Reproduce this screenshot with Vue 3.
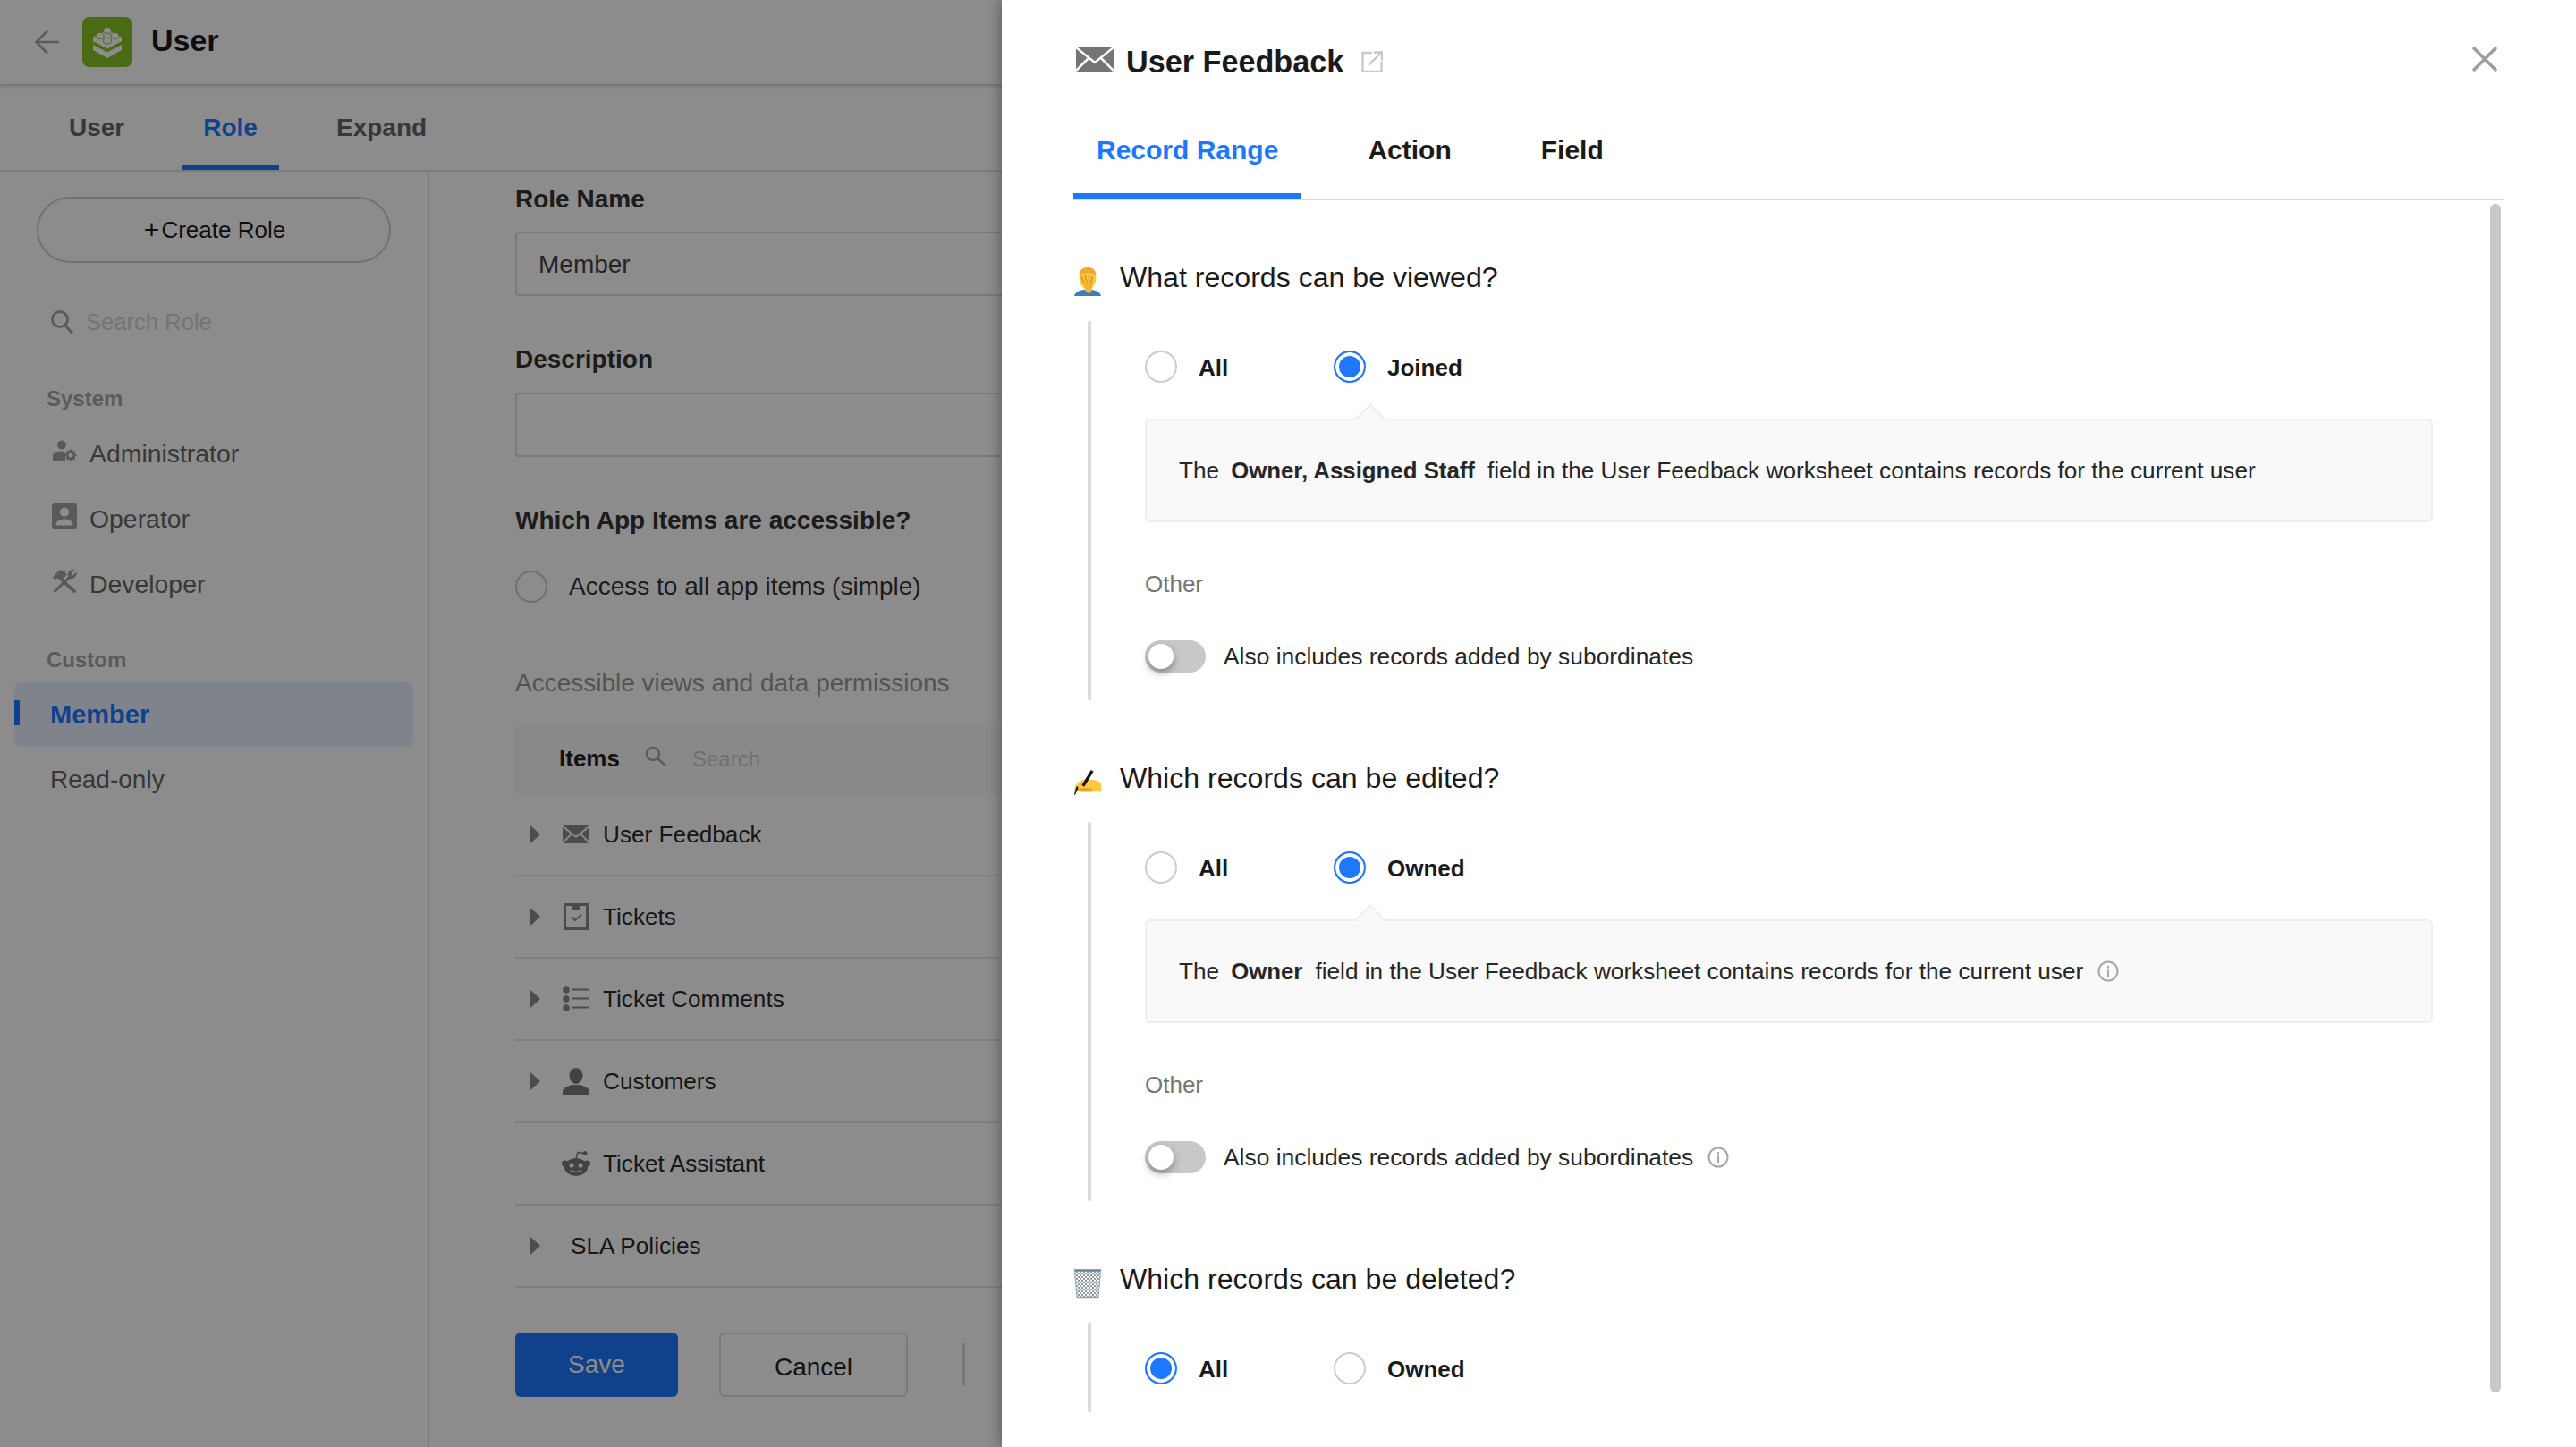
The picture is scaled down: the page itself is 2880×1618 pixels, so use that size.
<script setup>
const topTabs = ['User', 'Role', 'Expand']
const systemRoles = [
  { name: 'Administrator', icon: 'admin' },
  { name: 'Operator', icon: 'operator' },
  { name: 'Developer', icon: 'tools' }
]
const items = [
  { name: 'User Feedback', icon: 'mail', arrow: true },
  { name: 'Tickets', icon: 'ticket', arrow: true },
  { name: 'Ticket Comments', icon: 'list', arrow: true },
  { name: 'Customers', icon: 'person', arrow: true },
  { name: 'Ticket Assistant', icon: 'bot', arrow: false },
  { name: 'SLA Policies', icon: '', arrow: true }
]
const sections = [
  {
    title: 'What records can be viewed?',
    emoji: 'facepalm',
    options: [{ label: 'All', on: false }, { label: 'Joined', on: true }],
    field: 'Owner, Assigned Staff',
    info: false,
    toggleInfo: false
  },
  {
    title: 'Which records can be edited?',
    emoji: 'writing',
    options: [{ label: 'All', on: false }, { label: 'Owned', on: true }],
    field: 'Owner',
    info: true,
    toggleInfo: true
  },
  {
    title: 'Which records can be deleted?',
    emoji: 'trash',
    options: [{ label: 'All', on: true }, { label: 'Owned', on: false }],
    field: '',
    info: false,
    toggleInfo: false
  }
]
</script>

<template>
  <div class="page">
    <header class="app-head">
      <svg class="back" width="28" height="28" viewBox="0 0 28 28" fill="none" stroke="#a8a8a8" stroke-width="2.6">
        <path d="M1 14H27M14 1.500L1.500 14L14 26.500" />
      </svg>
      <span class="logo">
        <svg width="56" height="56" viewBox="0 0 56 56">
          <path d="M28 14L44 22.500V28L28 36.500L12 28V22.500Z" fill="#fff" />
          <path d="M12 31L28 39.500L44 31V37L28 46L12 37Z" fill="#fff" />
          <path d="M12 28L28 36.500L44 28" fill="none" stroke="#87c226" stroke-width="1.500" />
          <ellipse cx="28" cy="15" rx="4.500" ry="3.500" fill="#fff" stroke="#87c226" />
          <ellipse cx="19.500" cy="21" rx="4.500" ry="3.500" fill="#fff" stroke="#87c226" />
          <ellipse cx="36.500" cy="21" rx="4.500" ry="3.500" fill="#fff" stroke="#87c226" />
          <ellipse cx="28" cy="26.500" rx="4.500" ry="3.500" fill="#fff" stroke="#87c226" />
        </svg>
      </span>
      <span class="app-name">User</span>
    </header>

    <nav class="top-tabs">
      <span v-for="t in topTabs" :key="t" class="top-tab" :class="{ active: t === 'Role' }">{{ t }}</span>
    </nav>

    <div class="content">
      <aside class="sidebar">
        <div class="create-btn"><span class="plus">+</span>Create Role</div>
        <div class="side-search">
          <svg width="26" height="28" viewBox="0 0 26 28" fill="none" stroke="#a6a6a6" stroke-width="3">
            <circle cx="11" cy="11" r="8.500" />
            <path d="M17 18L25 27" />
          </svg>
          <span>Search Role</span>
        </div>
        <div class="side-label">System</div>
        <div v-for="r in systemRoles" :key="r.name" class="side-row">
          <svg v-if="r.icon === 'admin'" class="side-icon" width="28" height="24" viewBox="0 0 28 24" fill="#a3a3a3">
            <circle cx="11" cy="5.500" r="5" />
            <path d="M1 23V18C1 14 5 12.500 10 12.500C12 12.500 14 13 15 14V23Z" />
            <circle cx="21" cy="17" r="4" fill="none" stroke="#a3a3a3" stroke-width="3" />
            <path d="M21 10.500V13M21 21V23.500M14.500 17H17M25 17H27.500M16.500 12.500L18 14M24 20L25.500 21.500M16.500 21.500L18 20M24 14L25.500 12.500" stroke="#a3a3a3" stroke-width="2.200" />
          </svg>
          <svg v-else-if="r.icon === 'operator'" class="side-icon" width="28" height="28" viewBox="0 0 24 24">
            <path fill="#a3a3a3" d="M2.500 0H21.500A2.500 2.500 0 0 1 24 2.500V21.500A2.500 2.500 0 0 1 21.500 24H2.500A2.500 2.500 0 0 1 0 21.500V2.500A2.500 2.500 0 0 1 2.500 0ZM12 4A4.300 4.300 0 1 0 12 12.600A4.300 4.300 0 1 0 12 4ZM4 19.500V21H20V19.500C20 16.500 15 15 12 15C9 15 4 16.500 4 19.500Z" />
          </svg>
          <svg v-else class="side-icon" width="28" height="28" viewBox="0 0 28 28" fill="#a3a3a3">
            <path d="M1.500 25L19 8L21 10L3.500 27Z" />
            <path d="M9 13L11.500 10.500L27.500 25L25 27.500Z" />
            <path d="M1 9.500L8 1.500L16 2L14.500 4L17 6.500L10 13.500L7 10.500L3.500 12Z" />
            <path d="M18 9C16.500 4.500 20 0 25.500 1L21.500 5L23.500 7.500L27.500 3.500C28.500 8.500 24 12 20 11Z" />
          </svg>
          <span>{{ r.name }}</span>
        </div>
        <div class="side-label custom">Custom</div>
        <div class="side-row plain selected">Member</div>
        <div class="side-row plain">Read-only</div>
      </aside>

      <main class="main">
        <div class="field-title first">Role Name</div>
        <div class="text-input">Member</div>
        <div class="field-title">Description</div>
        <div class="text-input"></div>
        <div class="field-title">Which App Items are accessible?</div>
        <div class="simple-row">
          <span class="radio"></span>
          <span>Access to all app items (simple)</span>
        </div>
        <div class="muted-title">Accessible views and data permissions</div>
        <div class="items-head">
          <b>Items</b>
          <svg width="24" height="22" viewBox="0 0 24 22" fill="none" stroke="#a6a6a6" stroke-width="2.500">
            <circle cx="9" cy="8" r="7" />
            <path d="M14 13L23 21" />
          </svg>
          <span>Search</span>
        </div>
        <div v-for="it in items" :key="it.name" class="item-row" :class="{ bare: !it.icon }">
          <span class="arrow-slot"><i v-if="it.arrow" class="tri"></i></span>
          <span v-if="it.icon" class="item-icon">
            <svg v-if="it.icon === 'mail'" width="32" height="20" viewBox="0 0 42 28">
              <rect width="42" height="28" fill="#8a8a8a" />
              <path d="M0 1L21 18L42 1M0 27L15 12M42 27L27 12" fill="none" stroke="#fff" stroke-width="2.500" />
            </svg>
            <svg v-else-if="it.icon === 'ticket'" width="28" height="30" viewBox="0 0 28 30" fill="none" stroke="#8a8a8a">
              <rect x="1.500" y="1.500" width="25" height="27" stroke-width="3" />
              <path d="M10 2H18V7H10Z" fill="#8a8a8a" stroke="none" />
              <path d="M9 15L13 19L20 13" stroke-width="2" />
            </svg>
            <svg v-else-if="it.icon === 'list'" width="30" height="28" viewBox="0 0 30 28" fill="#8a8a8a">
              <circle cx="4" cy="4" r="3.800" />
              <circle cx="4" cy="14" r="3.800" />
              <circle cx="4" cy="24" r="3.800" />
              <path d="M11 2.500H30V4.500H11ZM11 12.500H30V14.500H11ZM11 22.500H30V24.500H11Z" />
            </svg>
            <svg v-else-if="it.icon === 'person'" width="30" height="30" viewBox="0 0 30 30" fill="#7a7a7a">
              <ellipse cx="15" cy="9" rx="7.500" ry="9" />
              <path d="M0 30V27C0 22 6 21 10 19H20C24 21 30 22 30 27V30Z" />
            </svg>
            <svg v-else width="32" height="28" viewBox="0 0 32 28" fill="#7a7a7a">
              <ellipse cx="16" cy="18" rx="13" ry="10" />
              <circle cx="3.500" cy="14" r="3.500" />
              <circle cx="28.500" cy="14" r="3.500" />
              <circle cx="26" cy="2.500" r="2.500" />
              <path d="M16 8L18 1.500L25 2.500" fill="none" stroke="#7a7a7a" stroke-width="1.500" />
              <circle cx="11" cy="16" r="2.500" fill="#fff" />
              <circle cx="21" cy="16" r="2.500" fill="#fff" />
              <path d="M10 21.500C13 24 19 24 22 21.500" fill="none" stroke="#fff" stroke-width="1.500" />
            </svg>
          </span>
          <span>{{ it.name }}</span>
        </div>
        <div class="actions">
          <span class="btn-save">Save</span>
          <span class="btn-cancel">Cancel</span>
          <span class="btn-sep"></span>
        </div>
      </main>
    </div>

    <div class="mask"></div>

    <section class="drawer">
      <div class="drawer-head">
        <svg width="42" height="28" viewBox="0 0 42 28">
          <rect width="42" height="28" fill="#757575" />
          <path d="M0 1L21 18L42 1M0 27L15 12M42 27L27 12" fill="none" stroke="#fff" stroke-width="2.500" />
        </svg>
        <span class="drawer-title">User Feedback</span>
        <svg class="open-link" width="24" height="24" viewBox="0 0 24 24" fill="none" stroke="#c8c8c8" stroke-width="2.400">
          <path d="M12 2H1.500V23H22.500V12" />
          <path d="M8 16L22 2M14 1.500H23V10.500" />
        </svg>
        <svg class="close" width="28" height="28" viewBox="0 0 28 28" stroke="#9e9e9e" stroke-width="3.500">
          <path d="M1 1L27 27M27 1L1 27" />
        </svg>
      </div>
      <div class="drawer-tabs">
        <span class="drawer-tab active">Record Range</span>
        <span class="drawer-tab">Action</span>
        <span class="drawer-tab">Field</span>
      </div>
      <div class="scrollbar"></div>

      <div class="drawer-body">
        <div v-for="s in sections" :key="s.title" class="perm">
          <div class="perm-title">
            <svg v-if="s.emoji === 'facepalm'" width="32" height="32" viewBox="0 0 32 32">
              <path d="M1 32C2 28 6 26 11 25H21C26 26 30 28 31 32Z" fill="#3f7cb8" />
              <ellipse cx="16" cy="12" rx="9.500" ry="12" fill="#fdc83e" />
              <path d="M6.500 9C7 2 11 0 16 0C21 0 25 2 25.500 9C22 5 10 5 6.500 9Z" fill="#f2a52f" />
              <path d="M9 10L12 18M13 8L15 17M17 8L18 17M21 10L20 18" stroke="#d98c1f" stroke-width="1.500" />
              <path d="M11 17H22L20 28C17 30 14 28 13 25Z" fill="#f5b335" />
            </svg>
            <svg v-else-if="s.emoji === 'writing'" width="34" height="32" viewBox="0 0 34 32">
              <path d="M7 15C12 12 17 11 20 13C25 12 30 14 33 17V27H14C9 27 4 27 1 24C2 21 4 17 7 15Z" fill="#fdc83e" />
              <path d="M5 24C10 22 15 22 22 23V27H8Z" fill="#e8a22b" />
              <path d="M21 1L10 19L13 21L24 3Z" fill="#141414" />
              <path d="M4 20L1 30L2 31L6 22Z" fill="#141414" />
            </svg>
            <svg v-else width="32" height="34" viewBox="0 0 32 34">
              <defs>
                <pattern id="mesh" width="4" height="4" patternUnits="userSpaceOnUse">
                  <rect width="4" height="4" fill="#f7f8f9" />
                  <path d="M0 0L4 4M4 0L0 4" stroke="#76848e" stroke-width=".8" />
                </pattern>
              </defs>
              <path d="M1 2H31L28 33H4Z" fill="url(#mesh)" />
              <path d="M1 2.500H31" stroke="#6f8494" stroke-width="2.500" />
              <path d="M1.500 3L4 33M30.500 3L28 33" stroke="#9aa8b2" stroke-width="1" />
              <path d="M4 32.500H28" stroke="#8fa3b2" stroke-width="1.500" />
            </svg>
            <span>{{ s.title }}</span>
          </div>
          <div class="perm-body">
            <div class="options">
              <label v-for="o in s.options" :key="o.label" class="option">
                <span class="radio" :class="{ on: o.on }"></span>
                <b>{{ o.label }}</b>
              </label>
            </div>
            <template v-if="s.field">
              <div class="note">
                <i class="caret"></i>
                <span>The</span><b>{{ s.field }}</b><span>field in the User Feedback worksheet contains records for the current user</span>
                <svg v-if="s.info" class="info" width="24" height="24" viewBox="0 0 24 24" fill="none" stroke="#a6a6a6" stroke-width="2">
                  <circle cx="12" cy="12" r="10.500" />
                  <path d="M12 10.500V18M12 6V8.500" />
                </svg>
              </div>
              <div class="other">Other</div>
              <div class="toggle-row">
                <span class="toggle"><i></i></span>
                <span>Also includes records added by subordinates</span>
                <svg v-if="s.toggleInfo" class="info" width="24" height="24" viewBox="0 0 24 24" fill="none" stroke="#a6a6a6" stroke-width="2">
                  <circle cx="12" cy="12" r="10.500" />
                  <path d="M12 10.500V18M12 6V8.500" />
                </svg>
              </div>
            </template>
          </div>
        </div>
      </div>
    </section>
  </div>
</template>

<style>
html,
body {
  margin: 0;
  background: #fff;
}
</style>

<style scoped>
.page {
  position: relative;
  width: 2880px;
  height: 1618px;
  overflow: hidden;
  background: #fff;
  color: #1a1a1a;
  font-family: "Liberation Sans", Arial, sans-serif;
  font-size: 28px;
  display: flex;
  flex-direction: column;
}

.app-head {
  height: 94px;
  flex: none;
  display: flex;
  align-items: center;
  padding-left: 39px;
  box-shadow: 0 2px 4px rgba(0, 0, 0, 0.2);
}

.back {
  margin-right: 25px;
}

.logo {
  width: 56px;
  height: 56px;
  border-radius: 8px;
  background: #87c226;
  margin-right: 21px;
}

.logo svg {
  display: block;
}

.app-name {
  font-size: 34px;
  line-height: 40px;
  margin-top: -4px;
  font-weight: 700;
}

.top-tabs {
  height: 98px;
  flex: none;
  box-sizing: border-box;
  border-bottom: 2px solid #e0e0e0;
  padding-left: 53px;
  display: flex;
  gap: 40px;
}

.top-tab {
  padding: 0 24px;
  height: 96px;
  box-sizing: border-box;
  line-height: 98px;
  font-weight: 700;
  color: #666;
  border-bottom: 6px solid transparent;
}

.top-tab.active {
  color: #1e77ff;
  border-bottom-color: #1e77ff;
}

.content {
  flex: 1;
  display: flex;
  min-height: 0;
}

.sidebar {
  width: 480px;
  flex: none;
  box-sizing: border-box;
  border-right: 2px solid #dcdcdc;
  padding: 28px 16px 0;
}

.create-btn {
  margin: 0 25px;
  height: 74px;
  width: 396px;
  box-sizing: border-box;
  border: 2px solid #cfcfcf;
  border-radius: 37px;
  display: flex;
  align-items: center;
  justify-content: center;
  padding-left: 2px;
  font-size: 26px;
}

.plus {
  font-size: 30px;
  margin-right: 2px;
}

.side-search {
  margin-top: 46px;
  height: 40px;
  padding-left: 40px;
  display: flex;
  align-items: center;
  gap: 14px;
  font-size: 25.6px;
  color: #d4d4d4;
}

.side-label {
  margin-top: 50px;
  padding-left: 36px;
  height: 32px;
  line-height: 32px;
  margin-bottom: 9px;
  font-size: 24px;
  font-weight: 700;
  color: #a6a6a6;
}

.side-label.custom {
  margin-top: 33px;
}

.side-row {
  height: 72px;
  margin-bottom: 1px;
  padding-left: 42px;
  display: flex;
  align-items: center;
  font-size: 28.4px;
  color: #666;
  border-radius: 8px;
}

.side-icon {
  width: 28px;
  margin-right: 14px;
  position: relative;
  top: -3px;
}

.side-row.plain {
  padding-left: 40px;
  font-size: 28px;
}

.side-row.selected {
  position: relative;
  font-size: 29px;
  font-weight: 700;
  color: #1e77ff;
  background: #e8f1ff;
}

.selected::before {
  content: "";
  position: absolute;
  left: 0;
  top: 20px;
  width: 6px;
  height: 28px;
  background: #1e77ff;
}

.main {
  flex: 1;
  min-width: 0;
  padding-left: 96px;
}

.field-title {
  height: 36px;
  line-height: 36px;
  margin-top: 53px;
  margin-bottom: 19px;
  font-weight: 700;
  color: #333;
}

.field-title.first {
  margin-top: 13px;
  margin-bottom: 18px;
}

.text-input {
  height: 72px;
  line-height: 70px;
  box-sizing: border-box;
  border: 2px solid #dedede;
  border-radius: 4px;
  padding-left: 24px;
  color: #444;
}

.simple-row {
  height: 40px;
  margin-top: 36px;
  display: flex;
  align-items: center;
  gap: 24px;
  color: #333;
}

.muted-title {
  height: 36px;
  line-height: 36px;
  margin-top: 70px;
  color: #999;
}

.items-head {
  margin-top: 27px;
  height: 79px;
  background: #fafafa;
  padding-left: 49px;
  display: flex;
  align-items: center;
  font-size: 26px;
}

.items-head b {
  color: #222;
  width: 96px;
}

.items-head svg {
  position: relative;
  top: -3px;
}

.items-head span {
  margin-left: 29px;
  font-size: 24px;
  color: #ccc;
}

.item-row {
  height: 92px;
  box-sizing: border-box;
  border-bottom: 2px solid #e8e8e8;
  display: flex;
  align-items: center;
  padding-left: 17px;
  font-size: 26.2px;
  color: #2a2a2a;
}

.arrow-slot {
  width: 35px;
  flex: none;
}

.bare .arrow-slot {
  width: 45px;
}

.tri {
  display: block;
  width: 0;
  height: 0;
  border-left: 11px solid #8a8a8a;
  border-top: 10px solid transparent;
  border-bottom: 10px solid transparent;
}

.item-icon {
  width: 32px;
  margin-right: 14px;
  display: flex;
  justify-content: center;
}

.actions {
  margin-top: 50px;
  display: flex;
  align-items: center;
  gap: 46px;
}

.btn-save,
.btn-cancel {
  height: 72px;
  box-sizing: border-box;
  border-radius: 6px;
  display: flex;
  align-items: center;
  justify-content: center;
}

.btn-save {
  width: 182px;
  background: #1e77ff;
  color: #fff;
}

.btn-cancel {
  width: 211px;
  border: 2px solid #dcdcdc;
  padding-top: 6px;
  color: #222;
}

.btn-sep {
  width: 4px;
  height: 48px;
  margin-left: 14px;
  background: #dcdcdc;
}

.mask {
  position: absolute;
  inset: 0;
  background: rgba(0, 0, 0, 0.45);
}

.drawer {
  position: absolute;
  top: 0;
  right: 0;
  bottom: 0;
  width: 1760px;
  background: #fff;
  box-shadow: 0 0 16px rgba(0, 0, 0, 0.4);
  padding: 0 80px;
  box-sizing: border-box;
}

.drawer-head {
  height: 140px;
  box-sizing: border-box;
  padding-top: 49px;
  display: flex;
  align-items: flex-start;
  position: relative;
}

.drawer-head > svg:first-child {
  margin-left: 3px;
  margin-top: 3px;
}

.drawer-title {
  margin-left: 14px;
  font-size: 34.2px;
  line-height: 40px;
  font-weight: 700;
}

.open-link {
  margin-left: 20px;
  margin-top: 8px;
}

.close {
  position: absolute;
  top: 52px;
  right: 8px;
}

.drawer-tabs {
  height: 84px;
  box-sizing: border-box;
  border-bottom: 2px solid #dcdcdc;
  display: flex;
  gap: 48px;
}

.drawer-tab {
  height: 82px;
  box-sizing: border-box;
  padding: 0 26px;
  font-size: 30px;
  line-height: 56px;
  font-weight: 700;
  border-bottom: 6px solid transparent;
}

.drawer-tab.active {
  color: #1e77ff;
  border-bottom-color: #1e77ff;
}

.scrollbar {
  position: absolute;
  left: 1664px;
  top: 228px;
  width: 12px;
  height: 1329px;
  border-radius: 6px;
  background: #c8c8c8;
}

.drawer-body {
  padding-top: 66px;
}

.perm {
  margin-bottom: 67px;
}

.perm-title {
  height: 40px;
  display: flex;
  align-items: center;
  font-size: 32.1px;
  line-height: 40px;
  color: #1a1a1a;
}

.perm-title svg {
  width: 32px;
  margin-right: 20px;
  position: relative;
  top: 5px;
}

.perm-body {
  margin-top: 29px;
  margin-left: 16px;
  border-left: 4px solid #dcdcdc;
  border-radius: 2px;
  padding: 33px 0 31px 60px;
}

.options {
  display: flex;
  height: 36px;
  font-size: 26px;
}

.option {
  width: 211px;
  display: flex;
  align-items: center;
  gap: 24px;
}

.option b {
  padding-top: 2px;
}

.radio {
  width: 36px;
  height: 36px;
  flex: none;
  box-sizing: border-box;
  border: 2px solid #cccccc;
  border-radius: 50%;
  background: #fff;
}

.radio.on {
  border-color: #1e77ff;
  background: #1e77ff;
  box-shadow: inset 0 0 0 4px #fff;
}

.note {
  position: relative;
  margin-top: 40px;
  width: 1440px;
  height: 116px;
  box-sizing: border-box;
  background: #f9f9f9;
  border: 2px solid #eeeeee;
  border-radius: 6px;
  padding-left: 36px;
  display: flex;
  align-items: center;
  font-size: 26.2px;
  color: #262626;
}

.note b {
  margin: 0 14px 0 13px;
  font-size: 25.8px;
}

.caret {
  position: absolute;
  left: 238px;
  top: -14px;
  width: 24px;
  height: 24px;
  box-sizing: border-box;
  background: #f9f9f9;
  border-top: 2px solid #eeeeee;
  border-left: 2px solid #eeeeee;
  transform: rotate(45deg);
}

.info {
  margin-left: 16px;
  flex: none;
}

.other {
  margin-top: 52px;
  height: 34px;
  line-height: 34px;
  font-size: 26px;
  color: #757575;
}

.toggle-row {
  margin-top: 46px;
  height: 36px;
  display: flex;
  align-items: center;
  font-size: 26.4px;
  color: #262626;
}

.toggle {
  position: relative;
  width: 68px;
  height: 36px;
  margin-right: 20px;
  border-radius: 18px;
  background: #c8c8c8;
}

.toggle i {
  position: absolute;
  left: 4px;
  top: 4px;
  width: 28px;
  height: 28px;
  border-radius: 50%;
  background: #fff;
  box-shadow: 0 4px 10px rgba(0, 0, 0, 0.35);
}
</style>
